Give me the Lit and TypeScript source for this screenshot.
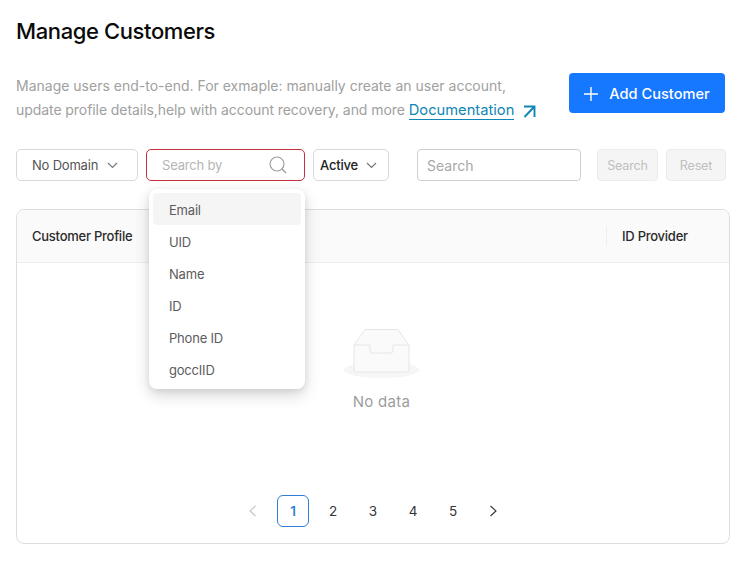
import { LitElement, html, css, svg } from "lit";
import { customElement } from "lit/decorators.js";

const chevron = svg`<path d="M1 1l4.5 4.5L10 1" fill="none" stroke="currentColor" stroke-width="1.2"/>`;

@customElement("app-root")
export class AppRoot extends LitElement {
  static styles = css`
    :host { display: block; width: 742px; height: 568px; box-sizing: border-box; padding: 18px 12px 0 16px; background: #fff; font-family: Inter, "Liberation Sans", sans-serif; color: #1f1f1f; overflow: hidden; }
    * { box-sizing: border-box; }
    h1 { margin: 0; font-size: 22px; line-height: 26px; font-weight: 500; color: #0a0a0a; letter-spacing: -0.39px; }
    .intro { display: flex; justify-content: space-between; margin-top: 28px; padding-right: 5px; height: 62px; }
    .intro p { margin: 0; padding-top: 2px; font-size: 14px; line-height: 24px; color: #a0a0a0; width: 530px; }
    .tight { letter-spacing: -0.07px; }
    .intro a { color: #0f86b5; text-decoration: none; border-bottom: 1px solid #0f86b5; font-size: 14.7px; }
    .intro .arrow { margin-left: 7px; vertical-align: -3px; }
    .add { width: 156px; height: 40px; border: 0; border-radius: 4px; background: #1677ff; color: #fff; font: 500 14.6px Inter, sans-serif; display: flex; align-items: center; justify-content: center; gap: 11px; padding: 1px 0 0; margin-top: 1px; }
    .toolbar { display: flex; height: 32px; align-items: stretch; margin-top: 15px; }
    .select { border: 1px solid #d9d9d9; border-radius: 5px; display: flex; align-items: center; font-size: 13px; letter-spacing: -0.2px; background: #fff; }
    .domain { width: 122px; padding-left: 15px; gap: 9px; color: #555; }
    .domain svg, .active svg { color: #777; }
    .by-wrap { position: relative; margin-left: 8px; width: 159px; }
    .by { width: 100%; height: 100%; border-color: #c4303c; padding: 0 17px 0 15px; justify-content: space-between; color: #b5b5b5; }
    .active { width: 76px; margin-left: 8px; padding-left: 6px; gap: 8px; color: #222; font-weight: 500; }
    .search { width: 164px; margin-left: 28px; border: 1px solid #cfcfcf; border-radius: 4px; padding-left: 9px; display: flex; align-items: center; font-size: 14px; color: #a8a8a8; }
    .btn { display: flex; align-items: center; justify-content: center; border: 1px solid #ececec; background: #f5f5f5; border-radius: 4px; color: #c0c0c0; font-size: 12.6px; letter-spacing: -0.2px; }
    .b1 { width: 61px; margin-left: 16px; }
    .b2 { width: 60px; margin-left: 8px; }
    .menu { position: absolute; z-index: 2; top: 40px; left: 3px; width: 156px; height: 200px; padding: 4px; background: #fff; border-radius: 8px; box-shadow: 0 6px 16px rgba(0,0,0,.16), 0 2px 6px rgba(0,0,0,.08); }
    .item { height: 32px; padding: 1px 0 0 16px; display: flex; align-items: center; font-size: 13px; letter-spacing: -0.2px; color: #5c5c5c; border-radius: 4px; }
    .item.on { background: #f5f5f5; }
    .table { margin-top: 28px; width: 714px; height: 335px; border: 1px solid #dedede; border-radius: 8px; display: flex; flex-direction: column; overflow: hidden; }
    .head { height: 53px; flex: none; background: #fafafa; border-bottom: 1px solid #ededed; display: flex; align-items: center; justify-content: space-between; font-size: 13px; letter-spacing: -0.25px; font-weight: 500; color: #2a2a2a; padding-left: 15px; }
    .head .last { width: 123px; height: 20px; border-left: 1px solid #eee; padding-left: 15px; display: flex; align-items: center; }
    .body { flex: 1; display: flex; flex-direction: column; align-items: center; }
    .empty { margin-top: 66px; padding-left: 17px; display: flex; flex-direction: column; align-items: center; }
    .empty span { margin-top: 13px; font-size: 15px; color: #9d9d9d; letter-spacing: .3px; }
    .pager { margin-top: auto; margin-bottom: 16px; display: flex; gap: 8px; align-items: center; }
    .page { width: 32px; height: 32px; display: flex; align-items: center; justify-content: center; font-size: 13.5px; color: #333; border-radius: 6px; }
    .page.cur { border: 1px solid #2f7fd6; color: #2f7fd6; font-weight: 600; }
    .page.off { color: #c4c4c4; }
  `;

  render() {
    const items = ["Email", "UID", "Name", "ID", "Phone ID", "goccIID"];
    return html`
      <h1>Manage Customers</h1>
      <div class="intro">
        <p>Manage users end-to-end. For exmaple: manually create an user account, <span class="tight">update profile details,help with account recovery, and more</span> <a>Documentation</a><svg class="arrow" width="18" height="14" viewBox="0 0 18 14"><path d="M3 2.5h10.500V13M13.500 2.500L3.500 13" fill="none" stroke="#0f86b5" stroke-width="1.9"/></svg></p>
        <button class="add"><svg width="14" height="14" viewBox="0 0 14 14"><path d="M7 0v14M0 7h14" stroke="#fff" stroke-width="1.4"/></svg>Add Customer</button>
      </div>
      <div class="toolbar">
        <div class="select domain">No Domain <svg width="11" height="7" viewBox="0 0 11 7">${chevron}</svg></div>
        <div class="by-wrap">
          <div class="select by">Search by <svg width="18" height="18" viewBox="0 0 18 18"><circle cx="8" cy="8" r="7" fill="none" stroke="#9a9a9a" stroke-width="1.1"/><path d="M13 13l4 4" stroke="#9a9a9a" stroke-width="1.2"/></svg></div>
          <div class="menu">${items.map((t, i) => html`<div class="item ${i === 0 ? "on" : ""}">${t}</div>`)}</div>
        </div>
        <div class="select active">Active <svg width="11" height="7" viewBox="0 0 11 7">${chevron}</svg></div>
        <div class="search">Search</div>
        <div class="btn b1">Search</div>
        <div class="btn b2">Reset</div>
      </div>
      <div class="table">
        <div class="head"><span>Customer Profile</span><span class="last">ID Provider</span></div>
        <div class="body">
          <div class="empty">
            <svg width="78" height="50" viewBox="0 0 78 50">
              <ellipse cx="38.500" cy="41" rx="38" ry="8" fill="#f6f6f6"/>
              <path d="M11 16L22 .5h33L66 16v25a2 2 0 0 1-2 2H13a2 2 0 0 1-2-2z" fill="#fafafa" stroke="#e6e6e6" stroke-width="1"/>
              <path d="M11 16h16v6a2 2 0 0 0 2 2h19a2 2 0 0 0 2-2v-6h16" fill="none" stroke="#e6e6e6" stroke-width="1"/>
            </svg>
            <span>No data</span>
          </div>
          <div class="pager">
            <div class="page off"><svg width="9" height="12" viewBox="0 0 9 12"><path d="M6.500 1L1 6l5.500 5" fill="none" stroke="currentColor" stroke-width="1.100"/></svg></div>
            <div class="page cur">1</div>
            ${[2, 3, 4, 5].map((n) => html`<div class="page">${n}</div>`)}
            <div class="page"><svg width="9" height="12" viewBox="0 0 9 12"><path d="M1.500 1L7 6l-5.500 5" fill="none" stroke="currentColor" stroke-width="1.100"/></svg></div>
          </div>
        </div>
      </div>
    `;
  }
}
